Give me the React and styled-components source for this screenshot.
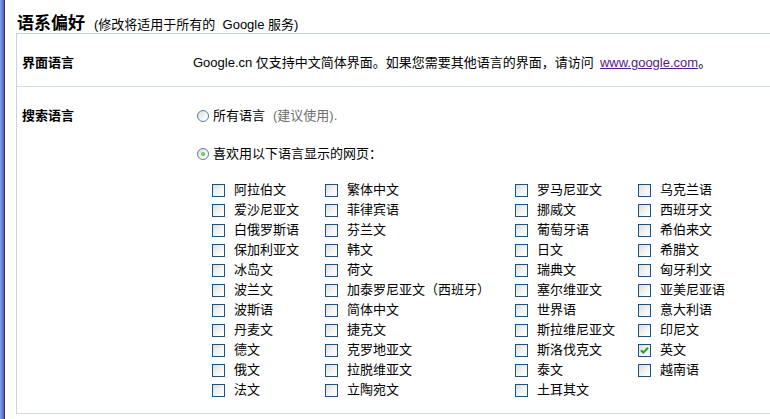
import React from "react";
import styled, { createGlobalStyle } from "styled-components";

const GlobalStyle = createGlobalStyle`
  html, body {
    margin: 0;
    padding: 0;
    background: #fff;
  }
  body {
    font-family: "Liberation Sans", "Noto Sans CJK SC", sans-serif;
    font-size: 13px;
    color: #000;
  }
`;

const Frame = styled.div`
  display: flex;
  min-height: 419px;
  overflow: hidden;
`;

const WindowEdge = styled.div`
  flex: 0 0 4px;
  background: linear-gradient(to right, #8c9fe9, #6b80d8 50%, #4d62c6);
  border-right: 1px solid #3a3a3a;
`;

const Page = styled.div`
  flex: 1;
  padding: 14px 0 0 11px;
`;

const Heading = styled.div`
  display: flex;
  align-items: baseline;
  line-height: 19px;
  height: 19px;
  padding-left: 1px;
`;

const HeadingTitle = styled.span`
  font-size: 17px;
  font-weight: bold;
`;

const HeadingNote = styled.span`
  font-size: 13px;
  margin-left: 9px;
`;

const Panel = styled.div`
  border-top: 1px solid #c8d2e2;
  border-left: 1px solid #c8d2e2;
  border-bottom: 1px solid #d2dbe7;
`;

const Row = styled.div`
  display: flex;
  & + & {
    border-top: 1px solid #d2dbe7;
  }
`;

const RowLabel = styled.div`
  flex: 0 0 176px;
  padding: 19px 0 13px 5px;
  box-sizing: border-box;
  font-weight: bold;
  line-height: 20px;
`;

const RowBody = styled.div`
  flex: 1;
  padding: 19px 0 13px 0;
  line-height: 20px;
`;

const Link = styled.a`
  color: #551a8b;
  text-decoration: underline;
  margin-left: 6px;
`;

const RadioLine = styled.label`
  display: flex;
  align-items: center;
  height: 20px;
  padding-left: 4px;
  & + & {
    margin-top: 18px;
  }
`;

const RadioCircle = styled.span`
  position: relative;
  width: 10px;
  height: 10px;
  border-radius: 50%;
  border: 1px solid #5a7ca8;
  background: linear-gradient(135deg, #dcdcd6, #ffffff 80%);
  margin-right: 4px;
  &::after {
    content: "";
    display: ${(p) => (p.$on ? "block" : "none")};
    position: absolute;
    left: 3px;
    top: 3px;
    width: 4px;
    height: 4px;
    border-radius: 50%;
    background: radial-gradient(circle at 40% 40%, #8ee07a, #2f9a25);
  }
`;

const Hint = styled.span`
  color: #6e6e6e;
  margin-left: 8px;
`;

const LangGrid = styled.div`
  display: grid;
  grid-template-columns: 113px 190px 123px 1fr;
  grid-template-rows: repeat(11, 20px);
  grid-auto-flow: column;
  margin: 16px 0 0 19px;
`;

const LangItem = styled.label`
  display: flex;
  align-items: center;
  white-space: nowrap;
`;

const Box = styled.span`
  position: relative;
  flex: 0 0 auto;
  width: 11px;
  height: 11px;
  border: 1px solid #1c5180;
  background: linear-gradient(135deg, #dcdcd7 0%, #f4f4f2 55%, #ffffff 100%);
  margin-right: 9px;
  svg {
    position: absolute;
    left: 1px;
    top: 1px;
  }
`;

const Check = () => (
  <svg width="9" height="9" viewBox="0 0 9 9">
    <path d="M1 4.2 L3.3 6.6 L8 1.8" fill="none" stroke="#21a121" strokeWidth="2" />
  </svg>
);

const languages = [
  "阿拉伯文", "爱沙尼亚文", "白俄罗斯语", "保加利亚文", "冰岛文", "波兰文", "波斯语", "丹麦文", "德文", "俄文", "法文",
  "繁体中文", "菲律宾语", "芬兰文", "韩文", "荷文", "加泰罗尼亚文（西班牙）", "简体中文", "捷克文", "克罗地亚文", "拉脱维亚文", "立陶宛文",
  "罗马尼亚文", "挪威文", "葡萄牙语", "日文", "瑞典文", "塞尔维亚文", "世界语", "斯拉维尼亚文", "斯洛伐克文", "泰文", "土耳其文",
  "乌克兰语", "西班牙文", "希伯来文", "希腊文", "匈牙利文", "亚美尼亚语", "意大利语", "印尼文", "英文", "越南语",
];

const checked = ["英文"];

export default function App() {
  return (
    <>
      <GlobalStyle />
      <Frame>
        <WindowEdge />
        <Page>
          <Heading>
            <HeadingTitle>语系偏好</HeadingTitle>
            <HeadingNote>(修改将适用于所有的&nbsp; Google 服务)</HeadingNote>
          </Heading>
          <Panel>
            <Row>
              <RowLabel>界面语言</RowLabel>
              <RowBody>
                Google.cn 仅支持中文简体界面。如果您需要其他语言的界面，请访问
                <Link href="#">www.google.com</Link>。
              </RowBody>
            </Row>
            <Row>
              <RowLabel>搜索语言</RowLabel>
              <RowBody>
                <RadioLine>
                  <RadioCircle />
                  所有语言
                  <Hint>(建议使用).</Hint>
                </RadioLine>
                <RadioLine>
                  <RadioCircle $on />
                  喜欢用以下语言显示的网页：
                </RadioLine>
                <LangGrid>
                  {languages.map((name) => (
                    <LangItem key={name}>
                      <Box>{checked.includes(name) && <Check />}</Box>
                      {name}
                    </LangItem>
                  ))}
                </LangGrid>
              </RowBody>
            </Row>
          </Panel>
        </Page>
      </Frame>
    </>
  );
}
